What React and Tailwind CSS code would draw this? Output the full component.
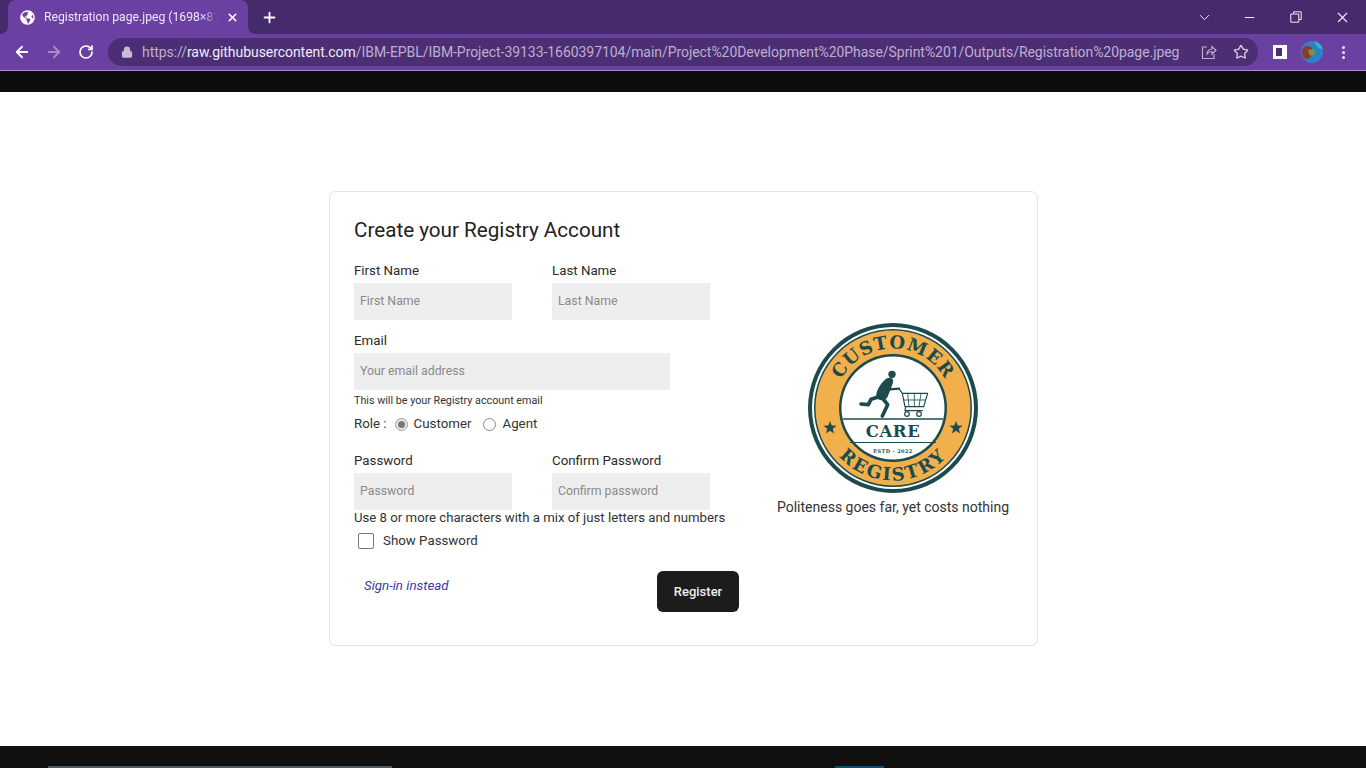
import React from 'react';
import { ArrowLeft, ArrowRight, RotateCw, Lock, Star, X, Plus, Minus, ChevronDown } from 'lucide-react';
import { FaGlobeAmericas } from 'react-icons/fa';

const TabFlare = ({ flip }) => (
  <svg width="8" height="8" viewBox="0 0 8 8" className={`absolute bottom-0 ${flip ? '-right-2 -scale-x-100' : '-left-2'}`}>
    <path d="M8 0V8H0C5 8 8 5 8 0Z" fill="#6a40a2" />
  </svg>
);

const Logo = () => (
  <svg width="172" height="172" viewBox="-86 -86 172 172">
    <defs>
      <path id="arcTop" d="M-59.5 0A59.5 59.5 0 0 1 59.5 0" />
      <path id="arcBottom" d="M-72.5 0A72.5 72.5 0 0 0 72.5 0" />
    </defs>
    <circle r="85" fill="#1d4a4c" />
    <circle r="81" fill="#fff" />
    <circle r="79" fill="#1d4a4c" />
    <circle r="77.5" fill="#f1b04c" />
    <circle r="54" fill="#1d4a4c" />
    <circle r="51.5" fill="#fff" />
    <line x1="-50" y1="11" x2="50" y2="11" stroke="#1d4a4c" strokeWidth="1.4" />
    <line x1="-43" y1="34.5" x2="43" y2="34.5" stroke="#1d4a4c" strokeWidth="1.2" />
    <text fill="#1d4a4c" fontFamily="'DejaVu Serif', serif" fontWeight="700" fontSize="18" letterSpacing="0.8" textAnchor="middle">
      <textPath href="#arcTop" startOffset="50%">CUSTOMER</textPath>
    </text>
    <text fill="#1d4a4c" fontFamily="'DejaVu Serif', serif" fontWeight="700" fontSize="18" letterSpacing="2" textAnchor="middle">
      <textPath href="#arcBottom" startOffset="50%">REGISTRY</textPath>
    </text>
    <text y="28.5" textAnchor="middle" fill="#1d4a4c" fontFamily="'DejaVu Serif', serif" fontWeight="700" fontSize="16.5" letterSpacing="0.6">CARE</text>
    <text y="44.5" textAnchor="middle" fill="#1d4a4c" fontFamily="'DejaVu Serif', serif" fontWeight="700" fontSize="5" letterSpacing="0.4">ESTD - 2022</text>
    <polygon points="-63,13 -61.3,17.6 -56.4,17.8 -60.3,20.8 -58.9,25.5 -63,22.8 -67.1,25.5 -65.7,20.8 -69.6,17.8 -64.7,17.6" fill="#1d4a4c" />
    <polygon points="63,13 64.7,17.6 69.6,17.8 65.7,20.8 67.1,25.5 63,22.8 58.9,25.5 60.3,20.8 56.4,17.8 61.3,17.6" fill="#1d4a4c" />
    <g transform="scale(0.3333) translate(-308 -292)" fill="none" stroke="#1d4a4c" strokeLinecap="round" strokeLinejoin="round">
      <circle cx="305" cy="191" r="11" fill="#1d4a4c" stroke="none" />
      <path d="M290 203C306 198 312 206 306 222L292 258C286 270 268 272 258 262C254 246 270 216 290 203Z" fill="#1d4a4c" stroke="none" />
      <path d="M292 218L298 236L326 234" strokeWidth="7" />
      <path d="M266 258L242 266L234 282L212 280" strokeWidth="11" />
      <path d="M276 262L292 282L276 316" strokeWidth="11" />
      <path d="M326 234L336 248H412L400 288H344L336 248M346 288L344 300H396" strokeWidth="3.5" />
      <path d="M352 248L356 288M372 248V288M392 248L386 288M340 268H406" strokeWidth="2.5" />
      <circle cx="350" cy="310" r="7" strokeWidth="3.5" />
      <circle cx="386" cy="310" r="7" strokeWidth="3.5" />
    </g>
  </svg>
);

const Field = ({ label, placeholder, className }) => (
  <div className={className}>
    <div className="text-[13.3px] leading-[15px] text-[#2b2b2b] mb-[5px]">{label}</div>
    <div className="h-[37px] bg-[#eeeeee] pl-[6px] flex items-center text-[12.3px] text-[#8a8a8a]">{placeholder}</div>
  </div>
);

export default function App() {
  return (
    <div className="h-[768px] w-[1366px] overflow-hidden flex flex-col bg-white font-['Roboto',sans-serif]">
      {/* browser tab strip */}
      <div className="h-[34px] bg-[#452b6b] flex items-end pl-2 shrink-0">
        <div className="relative w-[240px] h-[34px] bg-[#6a40a2] rounded-t-lg flex items-center pl-3 text-white">
          <TabFlare />
          <TabFlare flip />
          <FaGlobeAmericas size={15} className="shrink-0" />
          <span className="ml-[9px] w-[174px] overflow-hidden whitespace-nowrap text-[12.2px] text-[#eee6f6] [mask-image:linear-gradient(to_right,black_90%,transparent)]">Registration page.jpeg (1698×813)</span>
          <X size={13} strokeWidth={3} className="ml-[8px] shrink-0" />
        </div>
        <Plus size={17} strokeWidth={2.5} className="ml-[13px] mb-[8px] text-white" />
        <div className="flex-1" />
        <div className="flex items-center h-[34px] text-[#f1ecf6]">
          <ChevronDown size={17} strokeWidth={1.4} />
          <Minus size={15} strokeWidth={1.6} className="ml-[29px]" />
          <svg width="12" height="12" viewBox="0 0 12 12" className="ml-[33px]" fill="none" stroke="currentColor">
            <path d="M3.5 2.5V.8H11.2V8.5H9M.8 3H8.8V11.2H.8Z" />
          </svg>
          <X size={17} strokeWidth={1.6} className="ml-[32px] mr-[15px]" />
        </div>
      </div>

      {/* toolbar */}
      <div className="h-[36px] bg-[#6a40a2] flex items-center pl-[13px] shrink-0 text-white">
        <ArrowLeft size={18} strokeWidth={2.4} />
        <ArrowRight size={18} strokeWidth={2.4} className="ml-[14px] text-[#a78cc9]" />
        <RotateCw size={16} strokeWidth={2.6} className="ml-[15px]" />
        <div className="ml-[14px] w-[1150px] h-[28px] rounded-full bg-[#4b2e74] flex items-center pl-[13px]">
          <Lock size={12} strokeWidth={2.5} className="text-[#c9bcd9] fill-[#c9bcd9]" />
          <div className="ml-[9px] w-[1045px] whitespace-nowrap text-[14px] tracking-[-0.055px] text-[#bdaed0]">
            https://<span className="text-[#f1ecf6]">raw.githubusercontent.com</span>/IBM-EPBL/IBM-Project-39133-1660397104/main/Project%20Development%20Phase/Sprint%201/Outputs/Registration%20page.jpeg
          </div>
          <svg width="16" height="16" viewBox="0 0 16 16" className="ml-[14px] text-[#bdaed0]" fill="none" stroke="currentColor" strokeWidth="1.2">
            <path d="M6 3H1.5V14.5H13V10M6 10C6 7 8.5 5 11 5V2.5L15 6.2L11 10V7.5C9 7.5 7 8.5 6 10Z" />
          </svg>
          <Star size={16} strokeWidth={2} className="ml-[16px] text-[#d6cbe3]" />
        </div>
        <div className="ml-[15px] w-[14px] h-[14px] border-[3px] border-r-[5px] border-white bg-[#4b2e74]" />
        <svg width="24" height="24" viewBox="0 0 24 24" className="ml-[13px]">
          <circle cx="12" cy="12" r="11" fill="#2f7fc9" />
          <path d="M2 12C3 5 9 4 12 8C14 12 11 20 6 19C3 18 2 15 2 12Z" fill="#8c3b2a" />
          <path d="M8 10L14 9L16 14L10 16Z" fill="#6f9a45" />
          <path d="M14 1C19 2 22 6 23 9L18 8Z" fill="#36b2c4" />
        </svg>
        <div className="ml-[18px] flex flex-col gap-[2px]">
          <span className="w-[3px] h-[3px] rounded-full bg-[#ece5f4]" />
          <span className="w-[3px] h-[3px] rounded-full bg-[#ece5f4]" />
          <span className="w-[3px] h-[3px] rounded-full bg-[#ece5f4]" />
        </div>
      </div>
      <div className="h-px bg-[#a98fcb] shrink-0" />
      <div className="h-[21px] bg-[#0d0d0d] shrink-0" />

      {/* page image */}
      <div className="flex-1 flex items-center justify-center pb-[1px] pl-px">
        <div className="w-[709px] h-[455px] border border-[#e2e2e2] rounded-[7px] flex pl-[24px]">
          <div className="w-[388px] pt-[24px] shrink-0">
            <h1 className="text-[20.65px] leading-[28px] text-[#222]">Create your Registry Account</h1>
            <div className="flex gap-[40px] mt-[19px]">
              <Field label="First Name" placeholder="First Name" className="w-[158px]" />
              <Field label="Last Name" placeholder="Last Name" className="w-[158px]" />
            </div>
            <Field label="Email" placeholder="Your email address" className="w-[316px] mt-[13px]" />
            <div className="text-[10.75px] leading-[12px] text-[#333] mt-[5px]">This will be your Registry account email</div>
            <div className="flex items-center text-[13.3px] leading-[16px] text-[#333] mt-[9px]">
              <span>Role :</span>
              <span className="ml-[8px] w-[13px] h-[13px] rounded-full border border-[#999] bg-[#e8e8e8] flex items-center justify-center">
                <span className="w-[7px] h-[7px] rounded-full bg-[#777]" />
              </span>
              <span className="ml-[6px]">Customer</span>
              <span className="ml-[12px] w-[13px] h-[13px] rounded-full border border-[#888]" />
              <span className="ml-[6px]">Agent</span>
            </div>
            <div className="flex gap-[40px] mt-[21px]">
              <Field label="Password" placeholder="Password" className="w-[158px]" />
              <Field label="Confirm Password" placeholder="Confirm password" className="w-[158px]" />
            </div>
            <div className="text-[13.2px] leading-[15px] text-[#333] whitespace-nowrap">Use 8 or more characters with a mix of just letters and numbers</div>
            <div className="flex items-center text-[13.3px] text-[#333] mt-[6px] ml-[4px]">
              <span className="w-[16px] h-[16px] rounded-[2px] border border-[#777]" />
              <span className="ml-[9px]">Show Password</span>
            </div>
            <div className="flex justify-between items-start mt-[20px]">
              <a className="ml-[10px] mt-[7px] text-[13.3px] leading-[16px] italic text-[#3a3ab0]">Sign-in instead</a>
              <button className="w-[82px] h-[41px] mr-[3px] rounded-[6px] bg-[#1c1c1c] text-[13px] font-medium text-[#eeeeee]">Register</button>
            </div>
          </div>
          <div className="flex-1 flex flex-col items-center pt-[130px] pl-[7px]">
            <Logo />
            <div className="text-[14px] leading-[18px] text-[#333] mt-[4px] whitespace-nowrap">Politeness goes far, yet costs nothing</div>
          </div>
        </div>
      </div>

      {/* bottom of the dark page */}
      <div className="h-[22px] bg-[#101010] flex items-end shrink-0">
        <div className="ml-[48px] w-[344px] h-[2px] bg-[#4d5b66]" />
        <div className="ml-[443px] w-[49px] h-[2px] bg-[#0f4c75]" />
      </div>
    </div>
  );
}
